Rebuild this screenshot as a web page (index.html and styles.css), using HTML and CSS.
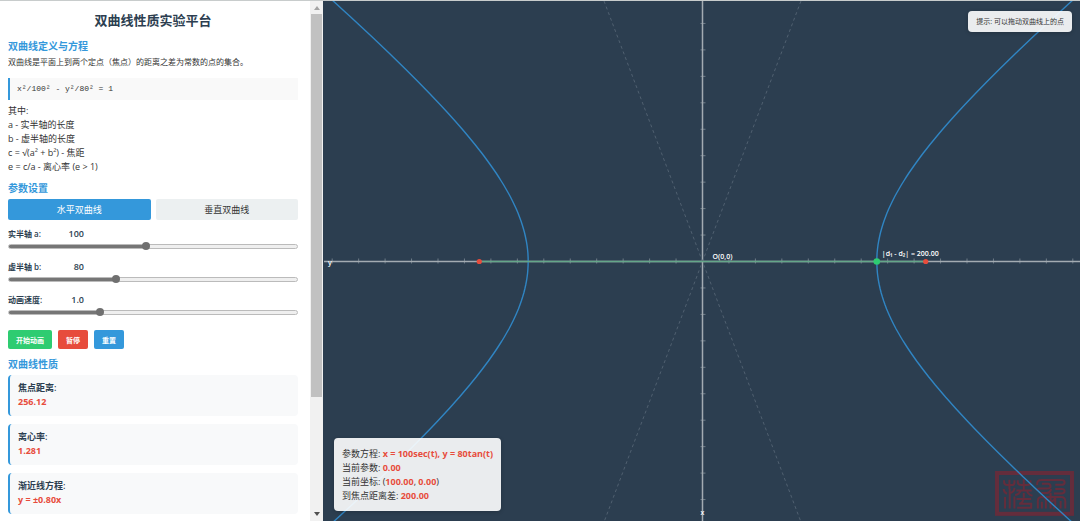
FILE: index.html
```html
<!DOCTYPE html>
<html lang="zh-CN">
<head>
  <meta charset="UTF-8">
  <meta name="viewport" content="width=device-width, initial-scale=1.0">
  <title>双曲线性质实验平台</title>
  <link rel="stylesheet" href="styles.css">
</head>
<body>
  <div class="container">
    <aside class="sidebar">
      <div class="panel" id="panel">
        <h1>双曲线性质实验平台</h1>

        <h2>双曲线定义与方程</h2>
        <p>双曲线是平面上到两个定点（焦点）的距离之差为常数的点的集合。</p>
        <div class="formula" id="formula">x²/100² - y²/80² = 1</div>
        <p class="notes">其中:<br>
          a - 实半轴的长度<br>
          b - 虚半轴的长度<br>
          c = √(a² + b²) - 焦距<br>
          e = c/a - 离心率 (e &gt; 1)</p>

        <h2>参数设置</h2>
        <div class="type-selector">
          <button class="type-btn active">水平双曲线</button>
          <button class="type-btn">垂直双曲线</button>
        </div>

        <div class="control-group">
          <label for="a">实半轴 a:</label>
          <output id="aValue" for="a">100</output>
          <input type="range" id="a" min="10" max="200" value="100">
        </div>
        <div class="control-group">
          <label for="b">虚半轴 b:</label>
          <output id="bValue" for="b">80</output>
          <input type="range" id="b" min="10" max="200" value="80">
        </div>
        <div class="control-group">
          <label for="speed">动画速度:</label>
          <output id="speedValue" for="speed">1.0</output>
          <input type="range" id="speed" min="0.1" max="3" step="0.1" value="1">
        </div>

        <div class="buttons">
          <button class="btn start">开始动画</button>
          <button class="btn pause">暂停</button>
          <button class="btn reset" id="reset">重置</button>
        </div>

        <h2>双曲线性质</h2>
        <div class="property">
          <div class="property-name">焦点距离:</div>
          <div class="value" id="focal">256.12</div>
        </div>
        <div class="property">
          <div class="property-name">离心率:</div>
          <div class="value" id="ecc">1.281</div>
        </div>
        <div class="property">
          <div class="property-name">渐近线方程:</div>
          <div class="value" id="asym">y = ±0.80x</div>
        </div>
      </div>

      <div class="scrollbar" aria-hidden="true">
        <svg class="arrow up" viewBox="0 0 6 4"><path d="M0 4L3 0L6 4z"/></svg>
        <div class="scroll-track"><div class="scroll-thumb" id="thumb"></div></div>
        <svg class="arrow down" viewBox="0 0 6 4"><path d="M0 0L3 4L6 0z"/></svg>
      </div>
    </aside>

    <main class="canvas-area">
      <svg class="seal" viewBox="0 0 236 134" aria-hidden="true">
        <rect x="6" y="6" width="224" height="122" stroke-width="12"/>
        <g stroke-width="6">
          <path d="M27 28V32Q27 42 38 42H50Q58 42 58 34V28M43 26V54"/>
          <path d="M68 28V32Q68 42 78 42H96Q106 42 106 32V28M86 24V58"/>
          <path d="M26 54Q26 64 36 68M30 78V112M44 54V112M58 50Q58 62 46 66M58 76Q58 84 58 112"/>
          <path d="M64 58H110M60 72Q72 70 76 60M112 74Q98 70 96 60M86 66V80"/>
          <path d="M64 84H108M84 84Q84 96 72 98H108V110H66"/>
        </g>
        <g stroke-width="6">
          <path d="M126 42V38Q126 27 138 27H198Q208 27 208 34Q208 41 198 41H180"/>
          <path d="M140 38H158Q166 38 166 46Q166 52 156 52H132Q126 52 126 58V60"/>
          <path d="M138 66H152Q164 66 168 54M180 54H200Q208 54 208 60Q208 67 198 67H176"/>
          <path d="M128 112V90Q128 78 140 78Q152 78 152 90V112M140 92V112M166 66V112"/>
          <path d="M152 78H198Q210 78 210 92V112M180 78V104Q180 110 174 112M196 90V112M166 92Q176 90 180 80"/>
        </g>
      </svg>

      <svg class="plot" id="plot"></svg>

      <div class="hint">提示: 可以拖动双曲线上的点</div>

      <div class="info">
        <div>参数方程: <span class="value" id="param">x = 100sec(t), y = 80tan(t)</span></div>
        <div>当前参数: <span class="value">0.00</span></div>
        <div>当前坐标: (<span class="value" id="px">100.00</span>, <span class="value">0.00</span>)</div>
        <div>到焦点距离差: <span class="value" id="diff">200.00</span></div>
      </div>
    </main>
  </div>

  <script src="script.js"></script>
</body>
</html>
```

FILE: styles.css
```css
* {
  box-sizing: border-box;
  margin: 0;
  padding: 0;
}
body {
  font-family: "Open Sans", "Noto Sans CJK SC", sans-serif;
  font-size: 9px;
  line-height: 14px;
  color: #333;
}
button {
  font-family: inherit;
  font-size: 9px;
  border: none;
  border-radius: 2px;
  cursor: pointer;
}
.container {
  display: grid;
  grid-template-columns: 3fr 7fr;
  height: 100vh;
  border-top: 1px solid #c8cccc;
}

/* sidebar */
.sidebar {
  display: flex;
  min-height: 0;
  background: #fff;
  border-right: 1px solid #2c3e50;
}
.panel {
  flex: 1;
  overflow-y: auto;
  scrollbar-width: none;
  padding: 11px 12px 150px 8px;
}
.scrollbar {
  display: flex;
  flex-direction: column;
  align-items: center;
  width: 13px;
  padding: 5px 0;
  background: #f1f1f1;
}
.arrow {
  width: 6px;
  height: 4px;
}
.up {
  fill: #a3a3a3;
}
.down {
  fill: #505050;
}
.scroll-track {
  flex: 1;
  width: 11px;
  margin: 4px 0;
}
.scroll-thumb {
  background: #c1c1c1;
}
h1 {
  margin-bottom: 11px;
  font-size: 13px;
  font-weight: 600;
  line-height: 16px;
  text-align: center;
  color: #2c3e50;
}
h2 {
  margin-bottom: 4px;
  font-size: 10px;
  font-weight: 600;
  color: #3498db;
}
h1 + h2 {
  margin-bottom: 2px;
}
p {
  font-size: 8px;
}
.formula {
  margin: 9px 0 4px;
  padding: 4px 7px;
  font-family: "Liberation Mono", monospace;
  font-size: 8px;
  background: #f9f9f9;
  border-left: 2px solid #3498db;
}
.notes {
  margin-bottom: 7px;
  font-size: 9px;
}
.type-selector {
  display: grid;
  grid-template-columns: 1fr 1fr;
  gap: 5px;
  margin-bottom: 7px;
}
.type-btn {
  height: 21px;
  background: #ecf0f1;
  color: #333;
}
.type-btn.active {
  background: #3498db;
  color: #fff;
}
.control-group {
  display: grid;
  grid-template-columns: 48px 28px 1fr;
  margin-bottom: 10px;
  font-weight: 600;
  color: #2c3e50;
}
.control-group label {
  font-size: 8px;
}
.control-group output {
  text-align: right;
}
.control-group input {
  grid-column: 1 / -1;
  width: 100%;
  height: 8px;
  margin-top: 1px;
  appearance: none;
  background: none;
}
input::-webkit-slider-runnable-track {
  height: 5px;
  border: 1px solid #bbb;
  border-radius: 3px;
  background: linear-gradient(to right, #767676 var(--fill), #efefef var(--fill));
}
input::-webkit-slider-thumb {
  appearance: none;
  width: 8px;
  height: 8px;
  margin-top: -3px;
  border-radius: 50%;
  background: #707070;
}
.buttons {
  display: flex;
  gap: 6px;
  margin: 14px 0 8px;
}
.btn {
  height: 19px;
  padding: 0 8px;
  font-size: 7px;
  font-weight: 700;
  color: #fff;
}
.start {
  background: #2ecc71;
}
.pause {
  background: #e74c3c;
}
.reset {
  background: #3498db;
}
.property {
  margin-bottom: 8px;
  padding: 6px 8px 7px;
  background: #f8f9fa;
  border-left: 2px solid #3498db;
  border-radius: 4px;
}
.property-name {
  font-weight: 600;
  color: #2c3e50;
}
.value {
  font-weight: 700;
  color: #e74c3c;
}

/* plot */
.canvas-area {
  position: relative;
  overflow: hidden;
  background: #2c3e50;
}
.plot {
  position: relative;
  display: block;
  width: 100%;
  height: 100%;
  fill: none;
}
.axis {
  stroke: #a3abb2;
  stroke-width: 1.5;
}
.tick {
  stroke: #6f7c88;
}
.asymptote {
  stroke: #506070;
  stroke-dasharray: 3 3;
}
.curve {
  stroke: #3085c3;
  stroke-width: 1.4;
}
.distance {
  stroke: #64a689;
  stroke-width: 1.4;
}
.focus {
  fill: #e74c3c;
}
.point {
  fill: #2ecc71;
}
.plot text {
  fill: #fff;
  font-size: 7px;
  font-weight: 600;
}
.hint,
.info {
  position: absolute;
  background: rgba(255, 255, 255, 0.9);
  border-radius: 4px;
  box-shadow: 0 1px 4px rgba(0, 0, 0, 0.2);
}
.hint {
  top: 10px;
  right: 8px;
  padding: 4px 8px 3px;
  font-size: 7px;
}
.info {
  left: 10px;
  bottom: 10px;
  padding: 9px 8px 8px;
}
.seal {
  position: absolute;
  right: 6px;
  bottom: 5px;
  width: 79px;
  fill: none;
  stroke: #642d3c;
}
```

FILE: script.js
```js
const plot = document.getElementById("plot");
const panel = document.getElementById("panel");
const thumb = document.getElementById("thumb");
const ranges = document.querySelectorAll("input[type=range]");
const SCALE = 1.743;
const TICK = 26.45;

function line(cls, x1, y1, x2, y2) {
  return `<line class="${cls}" x1="${x1}" y1="${y1}" x2="${x2}" y2="${y2}"/>`;
}

// one branch of the hyperbola, side is 1 (right) or -1 (left)
function branch(a, b, cx, cy, side) {
  const pts = [];
  for (let y = -cy - 4; y <= cy + 4; y += 4) {
    const x = side * a * Math.sqrt(1 + (y * y) / (b * b));
    pts.push((cx + x).toFixed(1) + "," + (cy + y).toFixed(1));
  }
  return `<polyline class="curve" points="${pts.join(" ")}"/>`;
}

function draw(a, b) {
  const w = plot.clientWidth;
  const h = plot.clientHeight;
  const cx = Math.round(w / 2) + 0.5;
  const cy = Math.round(h / 2) + 0.5;
  const sa = a * SCALE;
  const sb = b * SCALE;
  const sc = Math.sqrt(sa * sa + sb * sb);
  const dx = cy * 0.378;

  let out = "";
  for (let d = TICK; d < cx; d += TICK) {
    out += line("tick", cx - d, cy - 3, cx - d, cy + 2);
    out += line("tick", cx + d, cy - 3, cx + d, cy + 2);
  }
  for (let d = TICK; d < cy; d += TICK) {
    out += line("tick", cx - 2, cy - d, cx + 3, cy - d);
    out += line("tick", cx - 2, cy + d, cx + 3, cy + d);
  }
  out += line("axis", 0, cy, w, cy) + line("axis", cx, 0, cx, h);
  out += line("asymptote", cx - dx, 0, cx + dx, 2 * cy);
  out += line("asymptote", cx + dx, 0, cx - dx, 2 * cy);
  out += branch(sa, sb, cx, cy, 1) + branch(sa, sb, cx, cy, -1);
  out += line("distance", cx - sc, cy, cx + sc, cy);
  out += `<circle class="focus" cx="${cx - sc}" cy="${cy}" r="2.6"/>`;
  out += `<circle class="focus" cx="${cx + sc}" cy="${cy}" r="2.6"/>`;
  out += `<circle class="point" cx="${cx + sa}" cy="${cy}" r="3.3"/>`;
  out += `<text x="${cx + 10}" y="${cy - 3}">O(0,0)</text>`;
  out += `<text x="${cx + sa + 5}" y="${cy - 6}">|d₁ - d₂| = ${(2 * a).toFixed(2)}</text>`;
  out += `<text x="4" y="${cy + 3}">y</text>`;
  out += `<text x="${cx - 2}" y="${h - 6}">x</text>`;
  plot.innerHTML = out;
}

function updateThumb() {
  thumb.style.height = panel.clientHeight / panel.scrollHeight * 100 + "%";
  thumb.style.marginTop = panel.scrollTop / panel.scrollHeight * thumb.parentNode.clientHeight + "px";
}

function update() {
  const a = Number(document.getElementById("a").value);
  const b = Number(document.getElementById("b").value);
  const c = Math.sqrt(a * a + b * b);

  document.getElementById("aValue").textContent = a;
  document.getElementById("bValue").textContent = b;
  document.getElementById("speedValue").textContent =
    Number(document.getElementById("speed").value).toFixed(1);
  document.getElementById("formula").textContent = `x²/${a}² - y²/${b}² = 1`;
  document.getElementById("focal").textContent = (2 * c).toFixed(2);
  document.getElementById("ecc").textContent = (c / a).toFixed(3);
  document.getElementById("asym").textContent = `y = ±${(b / a).toFixed(2)}x`;
  document.getElementById("param").textContent = `x = ${a}sec(t), y = ${b}tan(t)`;
  document.getElementById("px").textContent = a.toFixed(2);
  document.getElementById("diff").textContent = (2 * a).toFixed(2);

  ranges.forEach(r => {
    const fill = (r.value - r.min) / (r.max - r.min) * 100;
    r.style.setProperty("--fill", fill + "%");
  });
  draw(a, b);
  updateThumb();
}

ranges.forEach(r => r.addEventListener("input", update));
document.getElementById("reset").addEventListener("click", () => {
  ranges.forEach(r => { r.value = r.defaultValue; });
  update();
});
panel.addEventListener("scroll", updateThumb);
window.addEventListener("resize", update);
update();
```
